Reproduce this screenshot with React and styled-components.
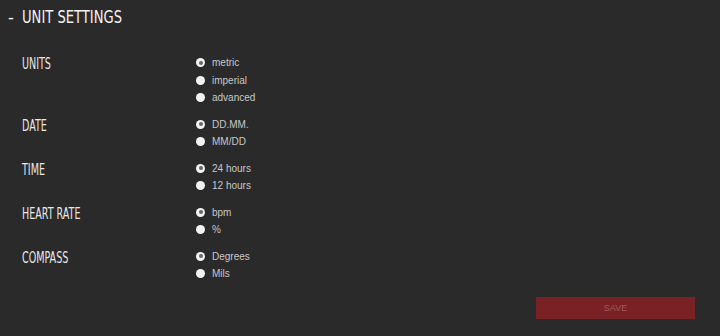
import React, { useState } from 'react';
import styled, { createGlobalStyle } from 'styled-components';

const Global = createGlobalStyle`
  html, body { margin: 0; padding: 0; background: #2a2a2a; }
  body { width: 720px; height: 336px; overflow: hidden; }
`;

const Page = styled.div`
  width: 720px; height: 336px;
  background: #2a2a2a;
  box-sizing: border-box;
`;

const Header = styled.div`
  display: flex; align-items: center;
  height: 33px;
  padding-left: 8px;
  font-family: 'DejaVu Sans Condensed', 'DejaVu Sans', sans-serif;
  color: #f2f2f2;
  font-size: 18px;
`;

const Dash = styled.span` width: 14px; `;

// the reference uses a narrow display face; squeeze the condensed one we have
const Narrow = styled.span`
  display: inline-block;
  transform: scaleX(${(p) => p.$x || 0.8});
  transform-origin: left center;
  white-space: nowrap;
`;

const Body = styled.div`
  display: flex; flex-direction: column;
  padding: 21px 0 0 22px;
  gap: 9px;
`;

const Group = styled.div`
  display: flex; align-items: flex-start;
`;

const Label = styled.div`
  width: 174px;
  font-family: 'DejaVu Sans Condensed', 'DejaVu Sans', sans-serif;
  font-size: 15px;
  color: #e8e8e8;
  line-height: 17px;
  padding-top: 2px;
`;

const Options = styled.div` display: flex; flex-direction: column; `;

const Option = styled.label`
  display: flex; align-items: center;
  height: 17.5px;
  font-family: 'Liberation Sans', Arial, sans-serif;
  font-size: 10px;
  color: #c8c8c8;
  cursor: pointer;
`;

const Dot = styled.span`
  width: 9px; height: 9px; border-radius: 50%;
  background: #f2f2f2;
  margin-right: 7px;
  display: flex; align-items: center; justify-content: center;
  &::after {
    content: '';
    width: 4px; height: 4px; border-radius: 50%;
    background: ${(p) => (p.$on ? '#666' : 'transparent')};
  }
`;

const Footer = styled.div`
  display: flex; justify-content: flex-end;
  padding: 0 25px 0 0;
  margin-top: 14px;
`;

const SaveBtn = styled.button`
  width: 159px; height: 22px;
  border: none;
  background: #7a2126;
  color: #9a5a5e;
  font-family: 'Liberation Sans', Arial, sans-serif;
  font-size: 9px;
  padding: 0;
`;

const groups = [
  { key: 'units', label: 'UNITS', opts: ['metric', 'imperial', 'advanced'] },
  { key: 'date', label: 'DATE', opts: ['DD.MM.', 'MM/DD'] },
  { key: 'time', label: 'TIME', opts: ['24 hours', '12 hours'] },
  { key: 'hr', label: 'HEART RATE', opts: ['bpm', '%'] },
  { key: 'compass', label: 'COMPASS', opts: ['Degrees', 'Mils'] },
];

export default function App() {
  const [sel, setSel] = useState({ units: 0, date: 0, time: 0, hr: 0, compass: 0 });
  return (
    <Page>
      <Global />
      <Header><Dash>-</Dash><Narrow $x={0.81}>UNIT SETTINGS</Narrow></Header>
      <Body>
        {groups.map((g) => (
          <Group key={g.key}>
            <Label><Narrow $x={0.71}>{g.label}</Narrow></Label>
            <Options>
              {g.opts.map((o, i) => (
                <Option key={o} onClick={() => setSel((s) => ({ ...s, [g.key]: i }))}>
                  <Dot $on={sel[g.key] === i} />
                  {o}
                </Option>
              ))}
            </Options>
          </Group>
        ))}
      </Body>
      <Footer><SaveBtn type="button">SAVE</SaveBtn></Footer>
    </Page>
  );
}
